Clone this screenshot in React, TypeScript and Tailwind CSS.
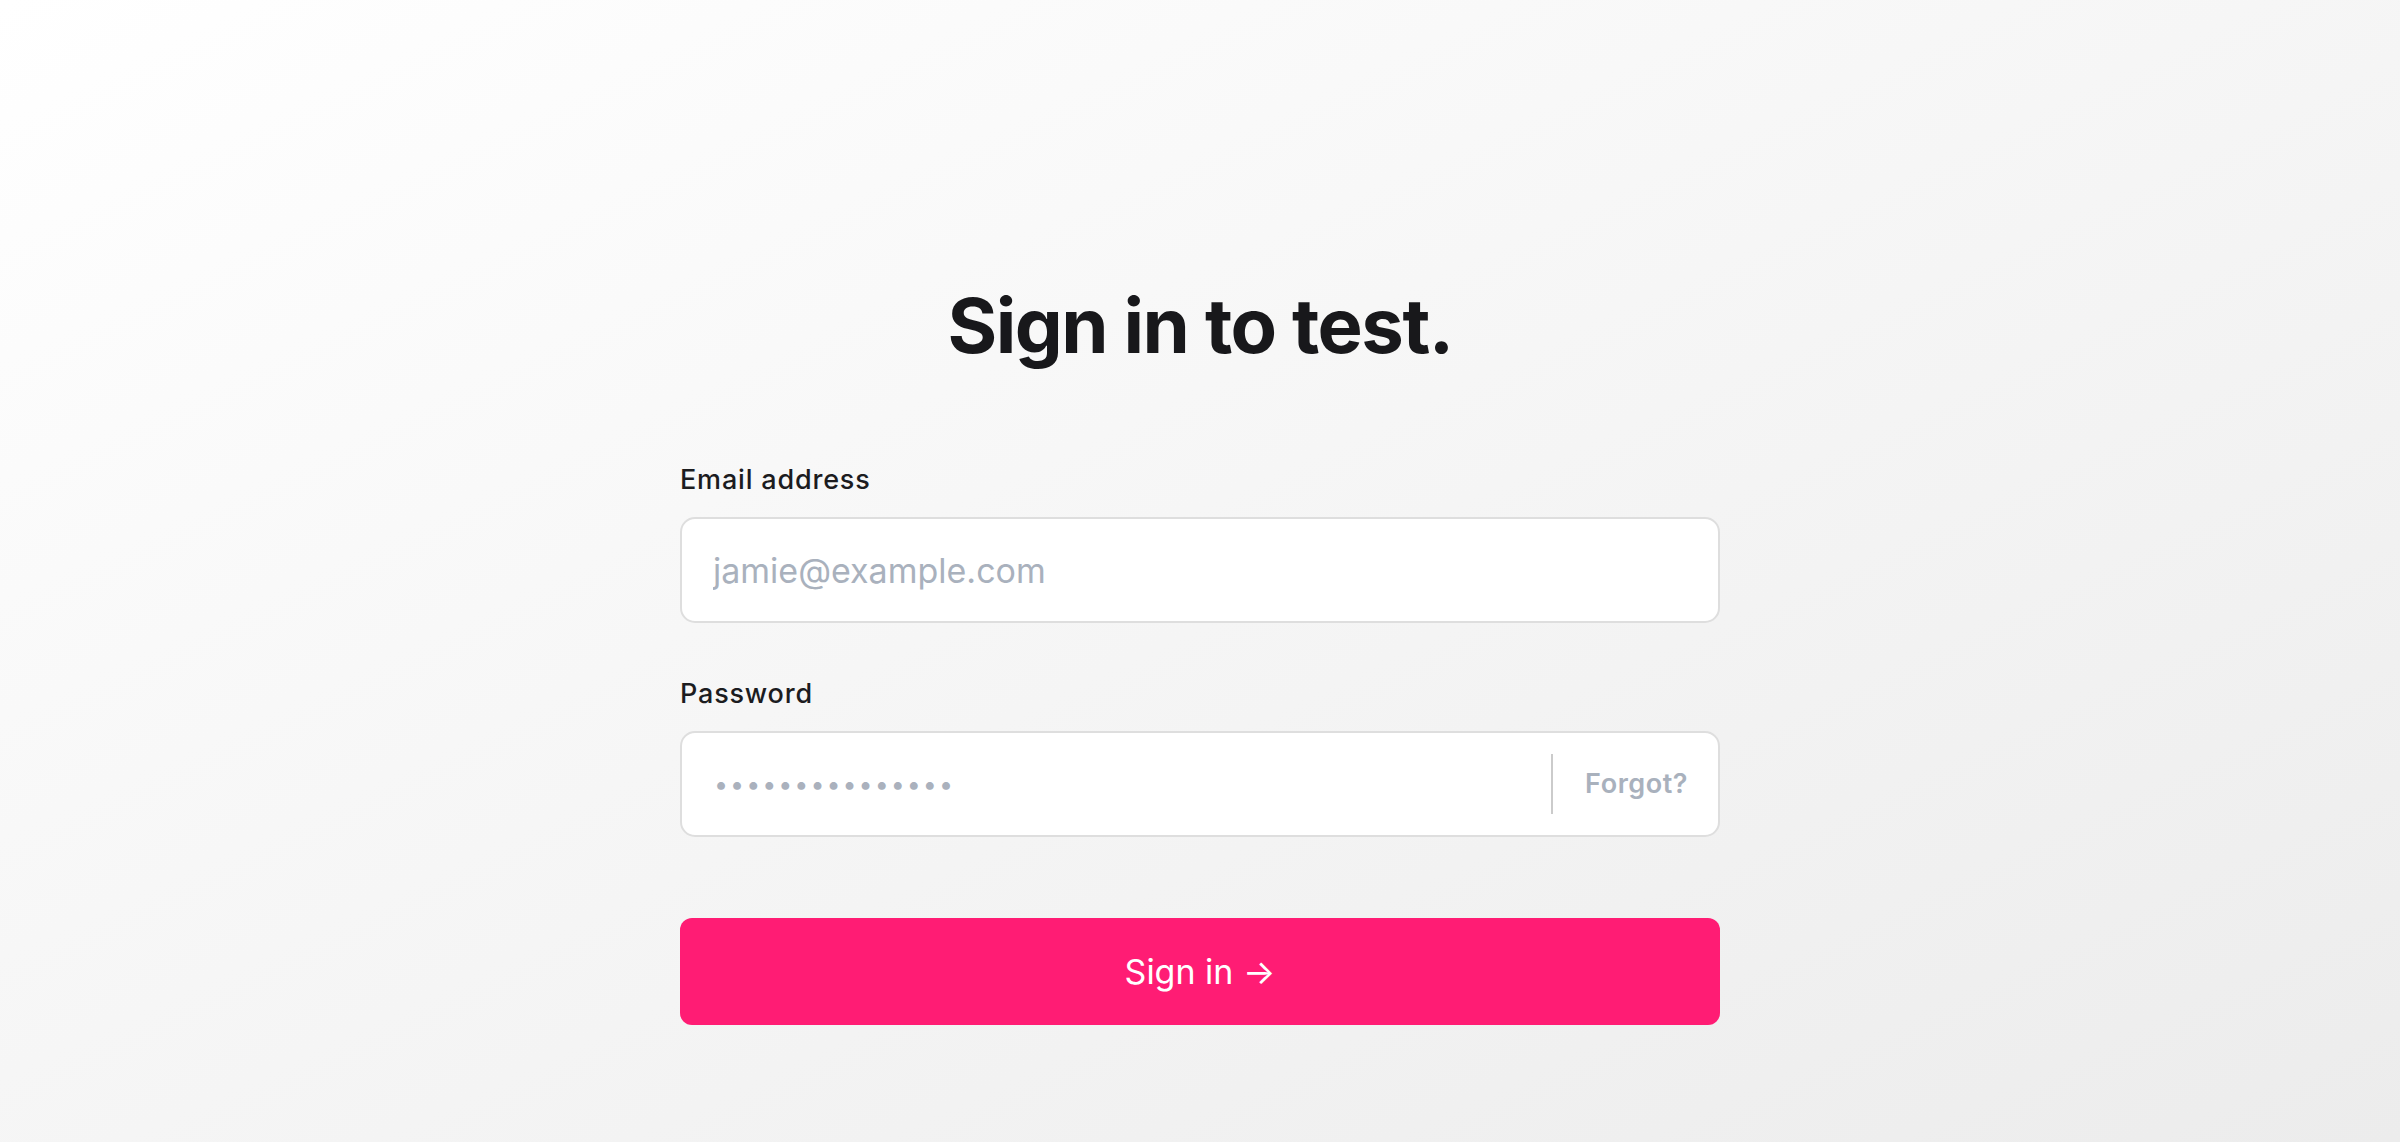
import { useState } from 'react';

export default function App() {
  const [email, setEmail] = useState('');
  const [password, setPassword] = useState('');

  return (
    <div
      className="min-h-screen w-full bg-gradient-to-br from-[#ffffff] to-[#ececec] flex flex-col items-center pt-[287px]"
      style={{ fontFamily: 'Inter, "Noto Sans", sans-serif' }}
    >
      <h1 className="text-[76px] leading-none font-bold tracking-[-0.02em] text-[#18181b]">
        Sign in to test.
      </h1>

      <form className="w-[1040px] mt-[103px] flex flex-col" onSubmit={(e) => e.preventDefault()}>
        <label htmlFor="email" className="text-[27px] leading-none font-medium text-[#1c1c1f] tracking-[0.03em]">
          Email address
        </label>
        <input
          id="email"
          type="email"
          value={email}
          onChange={(e) => setEmail(e.target.value)}
          placeholder="jamie@example.com"
          className="mt-[24px] h-[106px] w-full rounded-[15px] border-2 border-[#dedede] bg-white pl-[31px] pr-[30px] text-[34px] text-[#18181b] placeholder:text-[#a9b1bd] outline-none"
        />

        <label htmlFor="password" className="mt-[57px] text-[27px] leading-none font-medium text-[#1c1c1f] tracking-[0.03em]">
          Password
        </label>
        <div className="mt-[24px] h-[106px] w-full rounded-[15px] border-2 border-[#dedede] bg-white flex items-center">
          <input
            id="password"
            type="password"
            value={password}
            onChange={(e) => setPassword(e.target.value)}
            placeholder="•••••••••••••••"
            className="flex-1 h-full bg-transparent pl-[32px] text-[25px] tracking-[0.08em] text-[#18181b] placeholder:text-[#aab1bd] outline-none"
          />
          <div className="w-[2px] h-[60px] bg-[#cbcbcb]" />
          <button type="button" className="pl-[32px] pr-[30px] text-[27px] font-semibold tracking-[0.02em] text-[#a9b1bd]">
            Forgot?
          </button>
        </div>

        <button
          type="submit"
          className="mt-[81px] h-[107px] w-full rounded-[12px] bg-[#ff1c74] text-white text-[34px] font-normal"
        >
          Sign in →
        </button>
      </form>
    </div>
  );
}
